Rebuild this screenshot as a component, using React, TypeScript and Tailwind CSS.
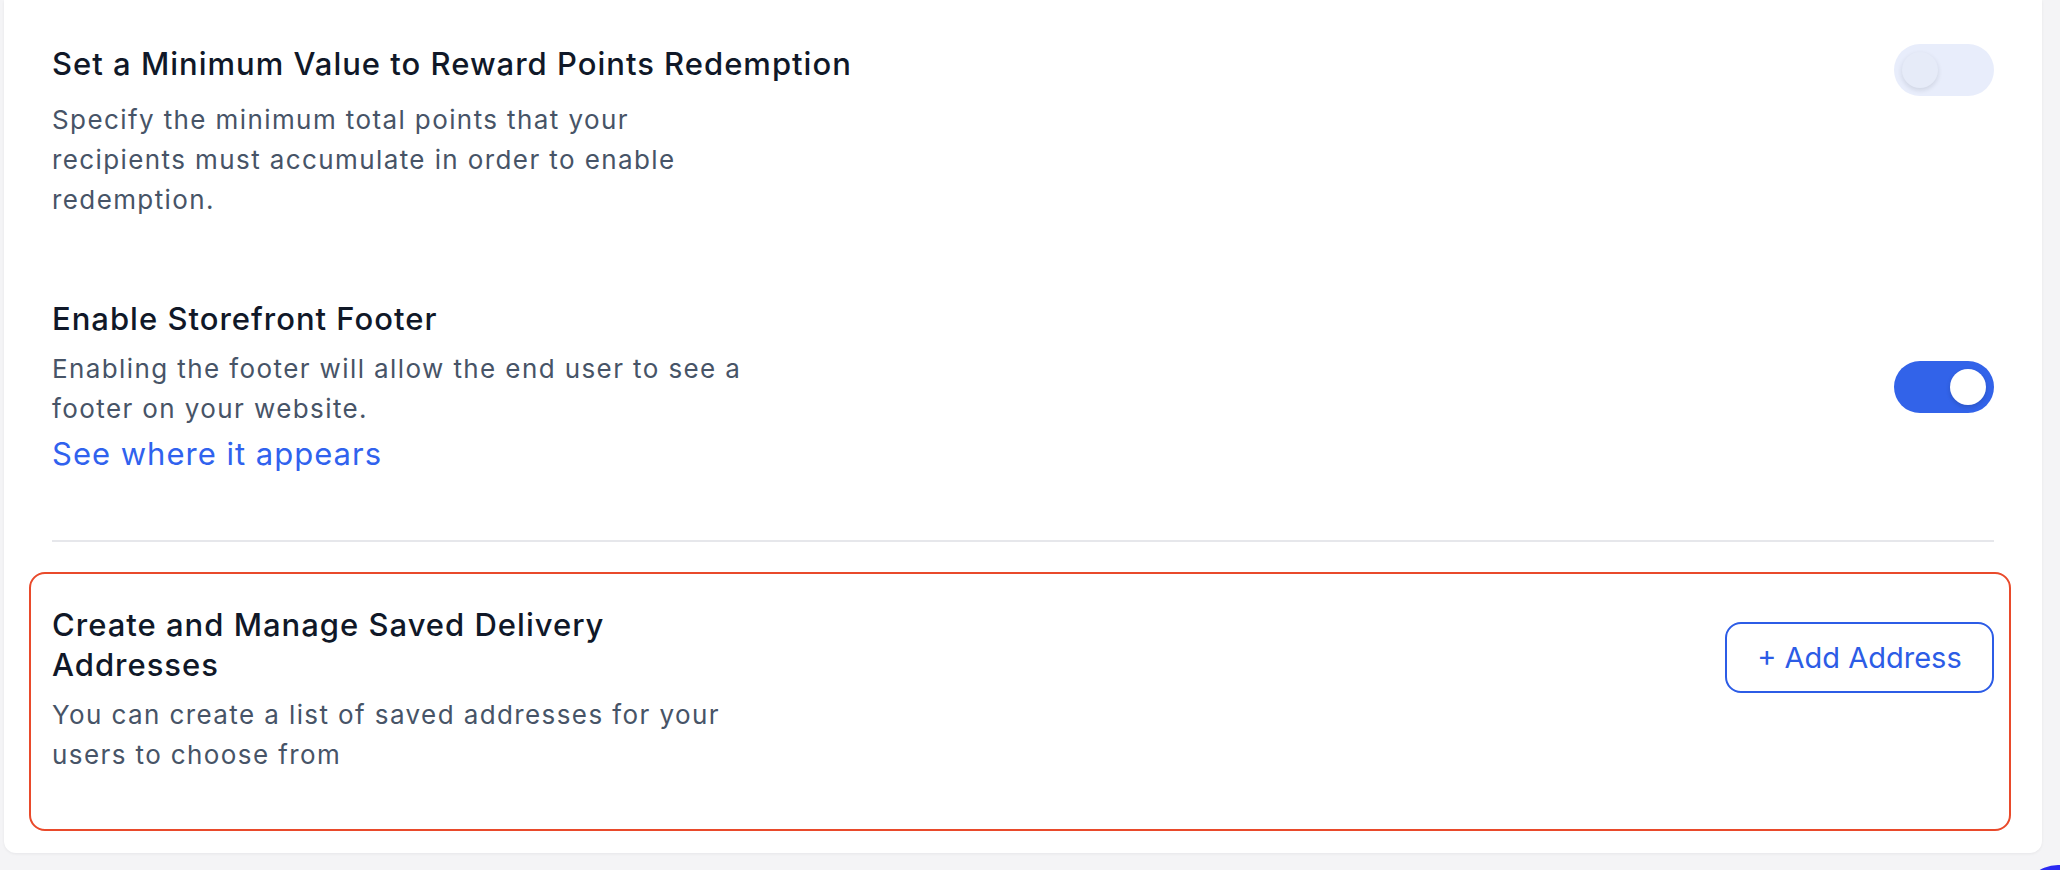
import React from "react";

function Toggle({ on }: { on: boolean }) {
  return (
    <div
      className={
        on
          ? "flex h-[52px] w-[100px] shrink-0 items-center justify-end rounded-full bg-[#3263e9] px-2"
          : "flex h-[52px] w-[100px] shrink-0 items-center justify-start rounded-full bg-[#e8edfb] px-2"
      }
    >
      <div
        className={
          on
            ? "h-9 w-9 rounded-full bg-white shadow-[0_2px_4px_rgba(16,24,40,0.18)]"
            : "h-9 w-9 rounded-full bg-[#e6ebf8] shadow-[0_2px_5px_rgba(16,24,40,0.12)]"
        }
      />
    </div>
  );
}

export default function App() {
  return (
    <div className="relative h-[870px] w-[2060px] overflow-hidden bg-[#f4f4f6] font-['Inter',sans-serif]">
      <div className="ml-1 w-[2038px] rounded-b-[12px] bg-white px-12 pb-[22px] pt-[44px] shadow-[0_1px_3px_rgba(16,24,40,0.06)]">
        {/* Section 1 */}
        <div className="flex items-start justify-between">
          <div>
            <h3 className="text-[31px] font-medium leading-[40px] tracking-[1px] text-[#101828]">
              Set a Minimum Value to Reward Points Redemption
            </h3>
            <p className="mt-[16px] max-w-[705px] text-[26px] leading-[40px] tracking-[1.4px] text-[#475467]">
              Specify the minimum total points that your recipients must accumulate in order to enable redemption.
            </p>
          </div>
          <Toggle on={false} />
        </div>

        {/* Section 2 */}
        <div className="mt-[79px] flex items-center justify-between">
          <div>
            <h3 className="text-[31px] font-medium leading-[40px] tracking-[1px] text-[#101828]">
              Enable Storefront Footer
            </h3>
            <p className="mt-[10px] max-w-[705px] text-[26px] leading-[40px] tracking-[1.4px] text-[#475467]">
              Enabling the footer will allow the end user to see a footer on your website.
            </p>
            <a className="mt-[5px] block text-[31px] leading-[40px] tracking-[1px] text-[#3062ee]">
              See where it appears
            </a>
          </div>
          <Toggle on={true} />
        </div>

        <div className="mt-[66px] h-[2px] bg-[#e6e7eb]" />

        {/* Section 3 */}
        <div className="-ml-[23px] -mr-[17px] mt-[30px] flex items-start justify-between rounded-[16px] border-2 border-[#e94a2b] pb-[54px] pl-[21px] pr-[15px] pt-[31px]">
          <div className="max-w-[705px]">
            <h3 className="text-[31px] font-medium leading-[40px] tracking-[1px] text-[#101828]">
              Create and Manage Saved Delivery Addresses
            </h3>
            <p className="mt-[10px] text-[26px] leading-[40px] tracking-[1.4px] text-[#475467]">
              You can create a list of saved addresses for your users to choose from
            </p>
          </div>
          <button className="mt-[17px] flex h-[71px] w-[269px] shrink-0 items-center justify-center rounded-[16px] border-2 border-[#2c5ce6] bg-white text-[29px] text-[#2c5ce6]">
            + Add Address
          </button>
        </div>
      </div>

      {/* chat launcher peeking at bottom-right */}
      <div className="absolute left-[2022px] top-[865px] h-[72px] w-[72px] rounded-full bg-[#2b2af2]" />
    </div>
  );
}
